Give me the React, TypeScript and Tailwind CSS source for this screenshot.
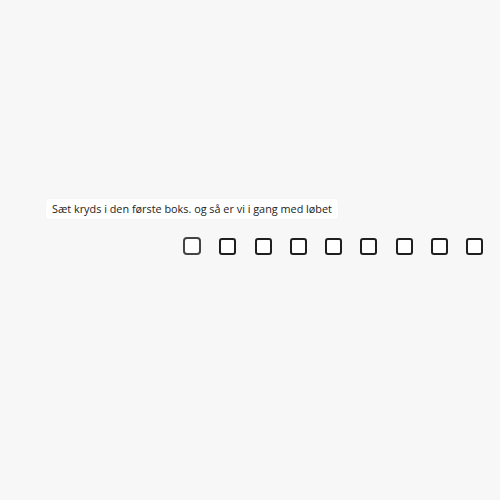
import React from 'react';

const boxes = Array.from({ length: 9 }, (_, i) => i);

export default function App() {
  return (
    <div
      className="h-[500px] w-[500px] bg-[#f7f7f7] overflow-hidden"
      style={{ fontFamily: '"Open Sans", "Noto Sans", sans-serif' }}
    >
      <div className="flex pt-[199px] pl-[46px]">
        <div className="flex h-[20px] items-center rounded-[4px] bg-white px-[6px] text-[10.85px] leading-none text-[#222] shadow-[0_0_2px_rgba(0,0,0,0.06)]">
          Sæt kryds i den første boks. og så er vi i gang med løbet
        </div>
      </div>
      <div className="mt-[18px] flex gap-[18.25px] pl-[183px]">
        {boxes.map((i) => (
          <div
            key={i}
            className={
              i === 0
                ? 'h-[18px] w-[18px] rounded-[4px] border-2 border-[#444] bg-white'
                : 'mt-[1px] h-[17px] w-[17px] rounded-[3px] border-2 border-[#1f1f1f] bg-white'
            }
          />
        ))}
      </div>
    </div>
  );
}
